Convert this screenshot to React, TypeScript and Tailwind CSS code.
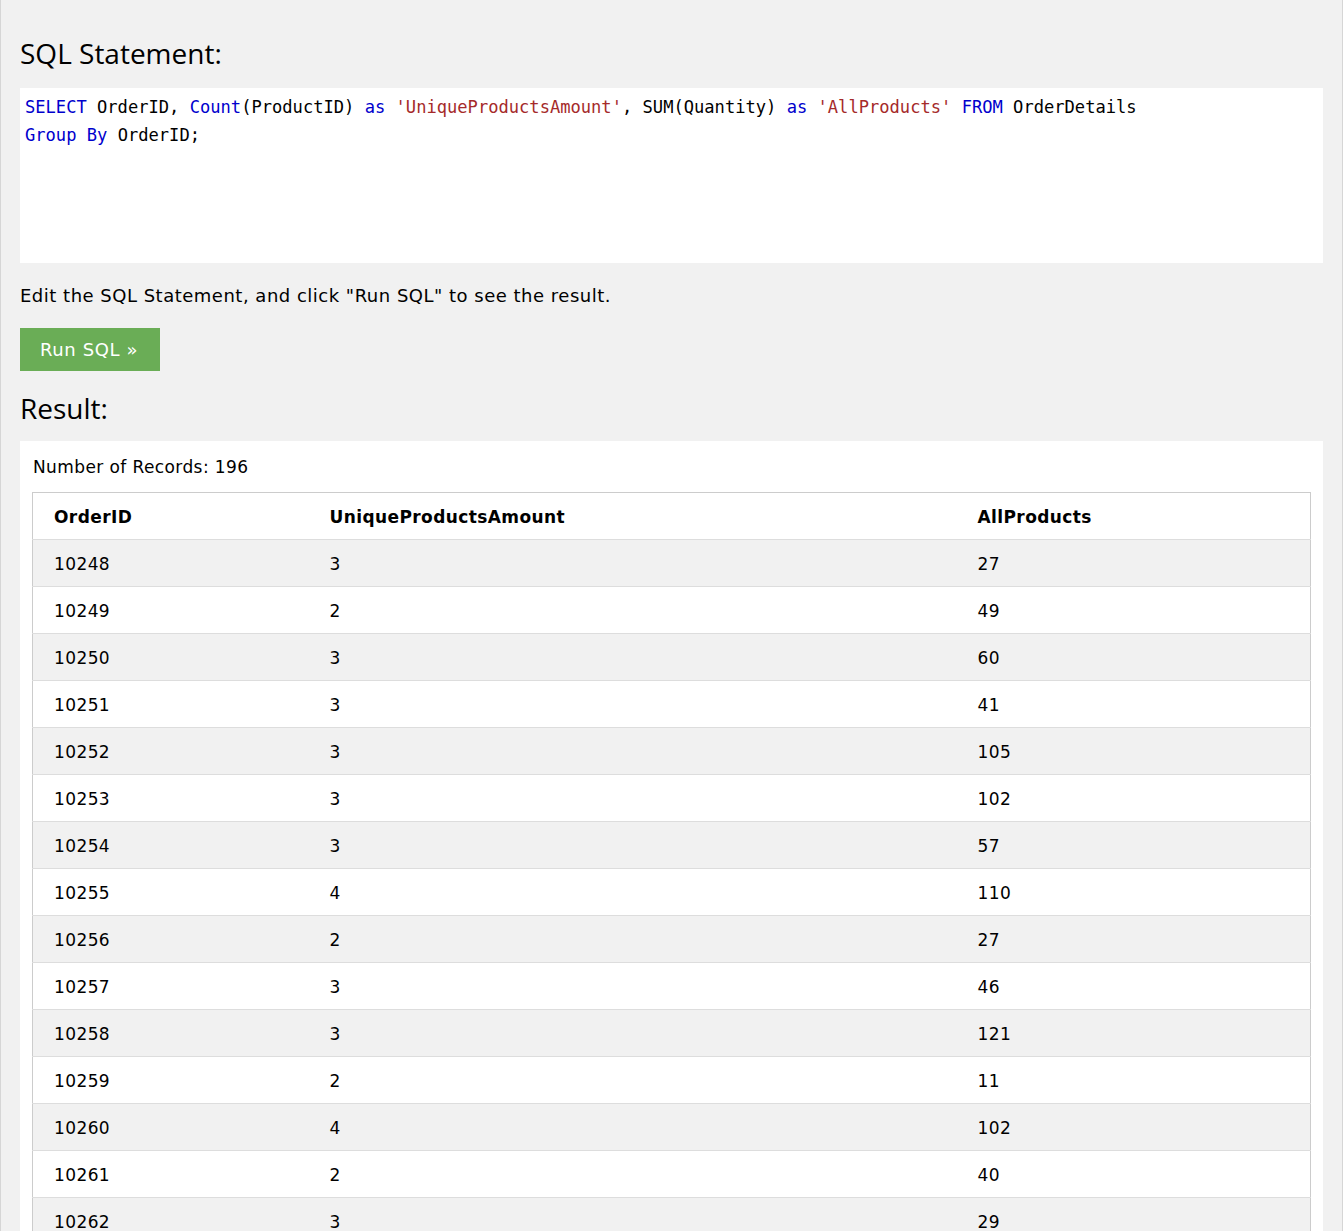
import React from "react";

const rows: [string, string, string][] = [
  ["10248", "3", "27"],
  ["10249", "2", "49"],
  ["10250", "3", "60"],
  ["10251", "3", "41"],
  ["10252", "3", "105"],
  ["10253", "3", "102"],
  ["10254", "3", "57"],
  ["10255", "4", "110"],
  ["10256", "2", "27"],
  ["10257", "3", "46"],
  ["10258", "3", "121"],
  ["10259", "2", "11"],
  ["10260", "4", "102"],
  ["10261", "2", "40"],
  ["10262", "3", "29"],
];

const verdana = { fontFamily: 'Verdana, "DejaVu Sans", sans-serif' };
const segoe = { fontFamily: '"Segoe UI", "Open Sans", sans-serif' };

export default function App() {
  return (
    <div className="min-h-screen bg-[#f1f1f1] border-x border-[#d6d6d6] px-[19px] pt-[35px] pb-10 text-black">
      <h2 className="text-[28px] leading-[36px] font-normal mb-[17px]" style={segoe}>
        SQL Statement:
      </h2>
      <div
        className="bg-white h-[175px] pt-[5px] pl-[5px] text-[17.1px] leading-[28px] whitespace-pre"
        style={{ fontFamily: 'Consolas, "DejaVu Sans Mono", monospace' }}
      >
        <div>
          <span className="text-[#0000cd]">SELECT</span> OrderID,{" "}
          <span className="text-[#0000cd]">Count</span>(ProductID){" "}
          <span className="text-[#0000cd]">as</span>{" "}
          <span className="text-[#a52a2a]">'UniqueProductsAmount'</span>, SUM(Quantity){" "}
          <span className="text-[#0000cd]">as</span>{" "}
          <span className="text-[#a52a2a]">'AllProducts'</span>{" "}
          <span className="text-[#0000cd]">FROM</span> OrderDetails
        </div>
        <div>
          <span className="text-[#0000cd]">Group</span>{" "}
          <span className="text-[#0000cd]">By</span> OrderID;
        </div>
      </div>
      <p className="mt-[21px] text-[18px] leading-[24px] tracking-[0.5px]" style={verdana}>
        Edit the SQL Statement, and click "Run SQL" to see the result.
      </p>
      <button
        className="mt-[20px] h-[43px] w-[140px] bg-[#6aad56] text-white text-[18px] tracking-[0.6px] text-left pl-[20px]"
        style={verdana}
      >
        Run SQL »
      </button>
      <h2 className="mt-[19px] text-[28px] leading-[36px] font-normal mb-[15px]" style={segoe}>
        Result:
      </h2>
      <div className="bg-white px-[12px] pt-[14px] pb-[20px]" style={verdana}>
        <div className="text-[17px] leading-[24px] tracking-[0.4px] mb-[13px] pl-[1px]">
          Number of Records: 196
        </div>
        <table className="w-full border border-[#cccccc] border-collapse text-[17px] tracking-[0.4px]">
          <colgroup>
            <col className="w-[276px]" />
            <col className="w-[648px]" />
            <col />
          </colgroup>
          <thead>
            <tr className="bg-white border-b border-[#dddddd] h-[47px]">
              <th className="text-left font-bold pl-[21px] pt-[4px]">OrderID</th>
              <th className="text-left font-bold pl-[21px] pt-[4px]">UniqueProductsAmount</th>
              <th className="text-left font-bold pl-[21px] pt-[4px]">AllProducts</th>
            </tr>
          </thead>
          <tbody>
            {rows.map((r, i) => (
              <tr
                key={r[0]}
                className={`${i % 2 === 0 ? "bg-[#f1f1f1]" : "bg-white"} border-b border-[#dddddd] h-[47px]`}
              >
                <td className="pl-[21px] pt-[4px]">{r[0]}</td>
                <td className="pl-[21px] pt-[4px]">{r[1]}</td>
                <td className="pl-[21px] pt-[4px]">{r[2]}</td>
              </tr>
            ))}
          </tbody>
        </table>
      </div>
    </div>
  );
}
